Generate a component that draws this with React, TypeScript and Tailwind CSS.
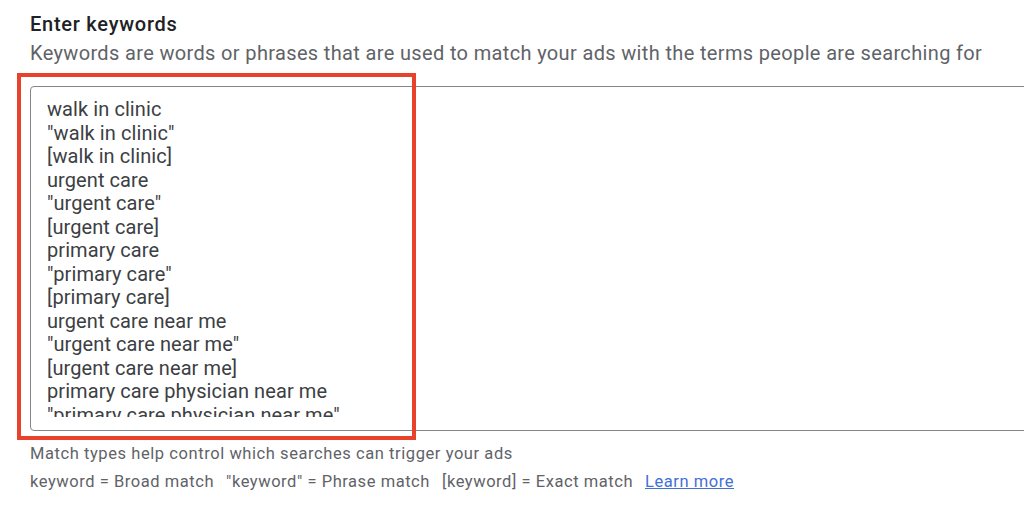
const keywords = [
  "walk in clinic",
  '"walk in clinic"',
  "[walk in clinic]",
  "urgent care",
  '"urgent care"',
  "[urgent care]",
  "primary care",
  '"primary care"',
  "[primary care]",
  "urgent care near me",
  '"urgent care near me"',
  "[urgent care near me]",
  "primary care physician near me",
  '"primary care physician near me"',
  "[primary care physician near me]",
];

export default function App() {
  return (
    <div className="w-[1024px] h-[521px] overflow-hidden bg-white font-['Roboto',sans-serif]">
      <div className="pl-[30px] pt-[10px]">
        <h2 className="text-[20px] leading-[28px] font-medium tracking-[0.75px] text-[#202124]">Enter keywords</h2>
        <p className="mt-[1px] text-[20px] leading-[28px] tracking-[0.35px] text-[#5f6368] whitespace-nowrap">
          Keywords are words or phrases that are used to match your ads with the terms people are searching for
        </p>

        <div className="relative mt-[19px]">
          <div className="w-[1100px] h-[345px] border border-[#80868b] rounded-[4px] pt-[11px] pb-[13px] pl-[16px]">
            <div className="h-full overflow-hidden text-[20px] leading-[23.5px] tracking-[0.08px] text-[#3c4043]">
              {keywords.map((k) => (
                <div key={k}>{k}</div>
              ))}
            </div>
          </div>
          <div className="absolute left-[-13px] top-[-13px] w-[399px] h-[367px] border-4 border-[#e8412c]" />
        </div>

        <p className="mt-[12px] text-[16.5px] leading-[22px] tracking-[0.57px] text-[#5f6368]">
          Match types help control which searches can trigger your ads
        </p>
        <div className="mt-[6px] flex gap-[12px] text-[16.5px] leading-[22px] tracking-[0.55px] text-[#5f6368] whitespace-nowrap">
          <span>keyword = Broad match</span>
          <span>"keyword" = Phrase match</span>
          <span>[keyword] = Exact match</span>
          <a className="text-[#4370d6] underline">Learn more</a>
        </div>
      </div>
    </div>
  );
}
